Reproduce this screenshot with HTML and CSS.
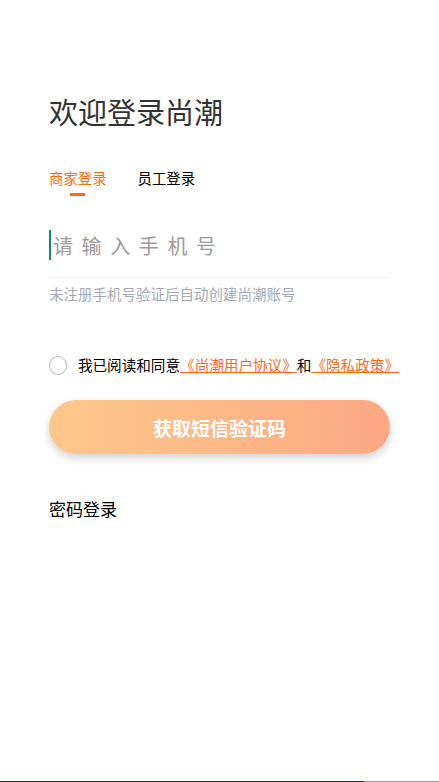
FILE: index.html
```html
<!DOCTYPE html>
<html>

<head>
    <meta name="viewport" content="width=device-width, initial-scale=1.0">
    <title>欢迎登录尚潮</title>
    <link rel="stylesheet" href="styles.css">
</head>

<body>
    <div id="page">
        <h1 class="title">欢迎登录尚潮</h1>

        <div class="tabs">
            <div class="tab active">商家登录</div>
            <div class="tab">员工登录</div>
        </div>

        <div class="phone-field">
            <span class="caret"></span>
            <span class="placeholder">请输入手机号</span>
        </div>
        <div class="hint">未注册手机号验证后自动创建尚潮账号</div>

        <div class="agree">
            <span class="check"></span>
            <span class="agree-text">我已阅读和同意<a class="link">《尚潮用户协议》</a>和<a class="link">《隐私政策》</a></span>
        </div>

        <button class="submit">获取短信验证码</button>

        <div class="pwd-login">密码登录</div>
    </div>
    <div id="bottom-bar"></div>
</body>

</html>
```

FILE: styles.css
```css
html,
body {
    margin: 0;
    height: 100%;
}

body {
    font-family: "Noto Sans CJK SC", "Noto Sans", sans-serif;
    background: #ffffff;
    color: #000000;
    overflow: hidden;
    position: relative;
}

#page {
    padding: 88px 40px 0 49px;
}

/* 标题 */
.title {
    margin: 0;
    font-size: 29px;
    font-weight: 400;
    line-height: 46px;
    color: #333333;
}

/* 登录方式切换 */
.tabs {
    display: flex;
    gap: 31px;
    margin-top: 34px;
}

.tab {
    position: relative;
    font-size: 14.4px;
    line-height: 20px;
    color: #000000;
}

.tab.active {
    color: #ff6a10;
}

.tab.active::after {
    content: "";
    position: absolute;
    left: 21px;
    top: 25px;
    width: 15px;
    height: 3px;
    background: #ff6a10;
}

/* 手机号输入 */
.phone-field {
    display: flex;
    align-items: center;
    width: 340px;
    height: 48px;
    margin-top: 33px;
    border-bottom: 1px solid #f0f0f0;
    padding-bottom: 8px;
}

.caret {
    width: 2px;
    height: 30px;
    background: #0f8a78;
    margin-right: 2px;
}

.placeholder {
    font-size: 20px;
    letter-spacing: 8.6px;
    color: #9a9a9a;
}

.hint {
    margin-top: 6px;
    font-size: 14.5px;
    line-height: 20px;
    color: #a3a8b2;
}

/* 协议 */
.agree {
    display: flex;
    align-items: center;
    margin-top: 51px;
}

.check {
    width: 17px;
    height: 17px;
    border: 1px solid #bbbbbb;
    border-radius: 50%;
    margin-right: 11px;
}

.agree-text {
    font-size: 14.6px;
    line-height: 20px;
    white-space: nowrap;
}

.link {
    color: #ff6a10;
    text-decoration: underline;
}

/* 获取验证码按钮 */
.submit {
    display: block;
    width: 341px;
    height: 54px;
    margin-top: 25px;
    border: none;
    border-radius: 27px;
    background: linear-gradient(90deg, #fdc88b, #fca883);
    box-shadow: 0 4px 8px rgba(0, 0, 0, 0.18);
    color: #ffffff;
    font-family: inherit;
    font-size: 19px;
    font-weight: 700;
}

.pwd-login {
    margin-top: 44px;
    font-size: 17px;
    line-height: 22px;
}

/* 底部条 */
#bottom-bar {
    position: absolute;
    left: 0;
    right: 0;
    bottom: 0;
    height: 1px;
    background: linear-gradient(90deg, #223048 83%, #9a9a9a 83%);
}
```
